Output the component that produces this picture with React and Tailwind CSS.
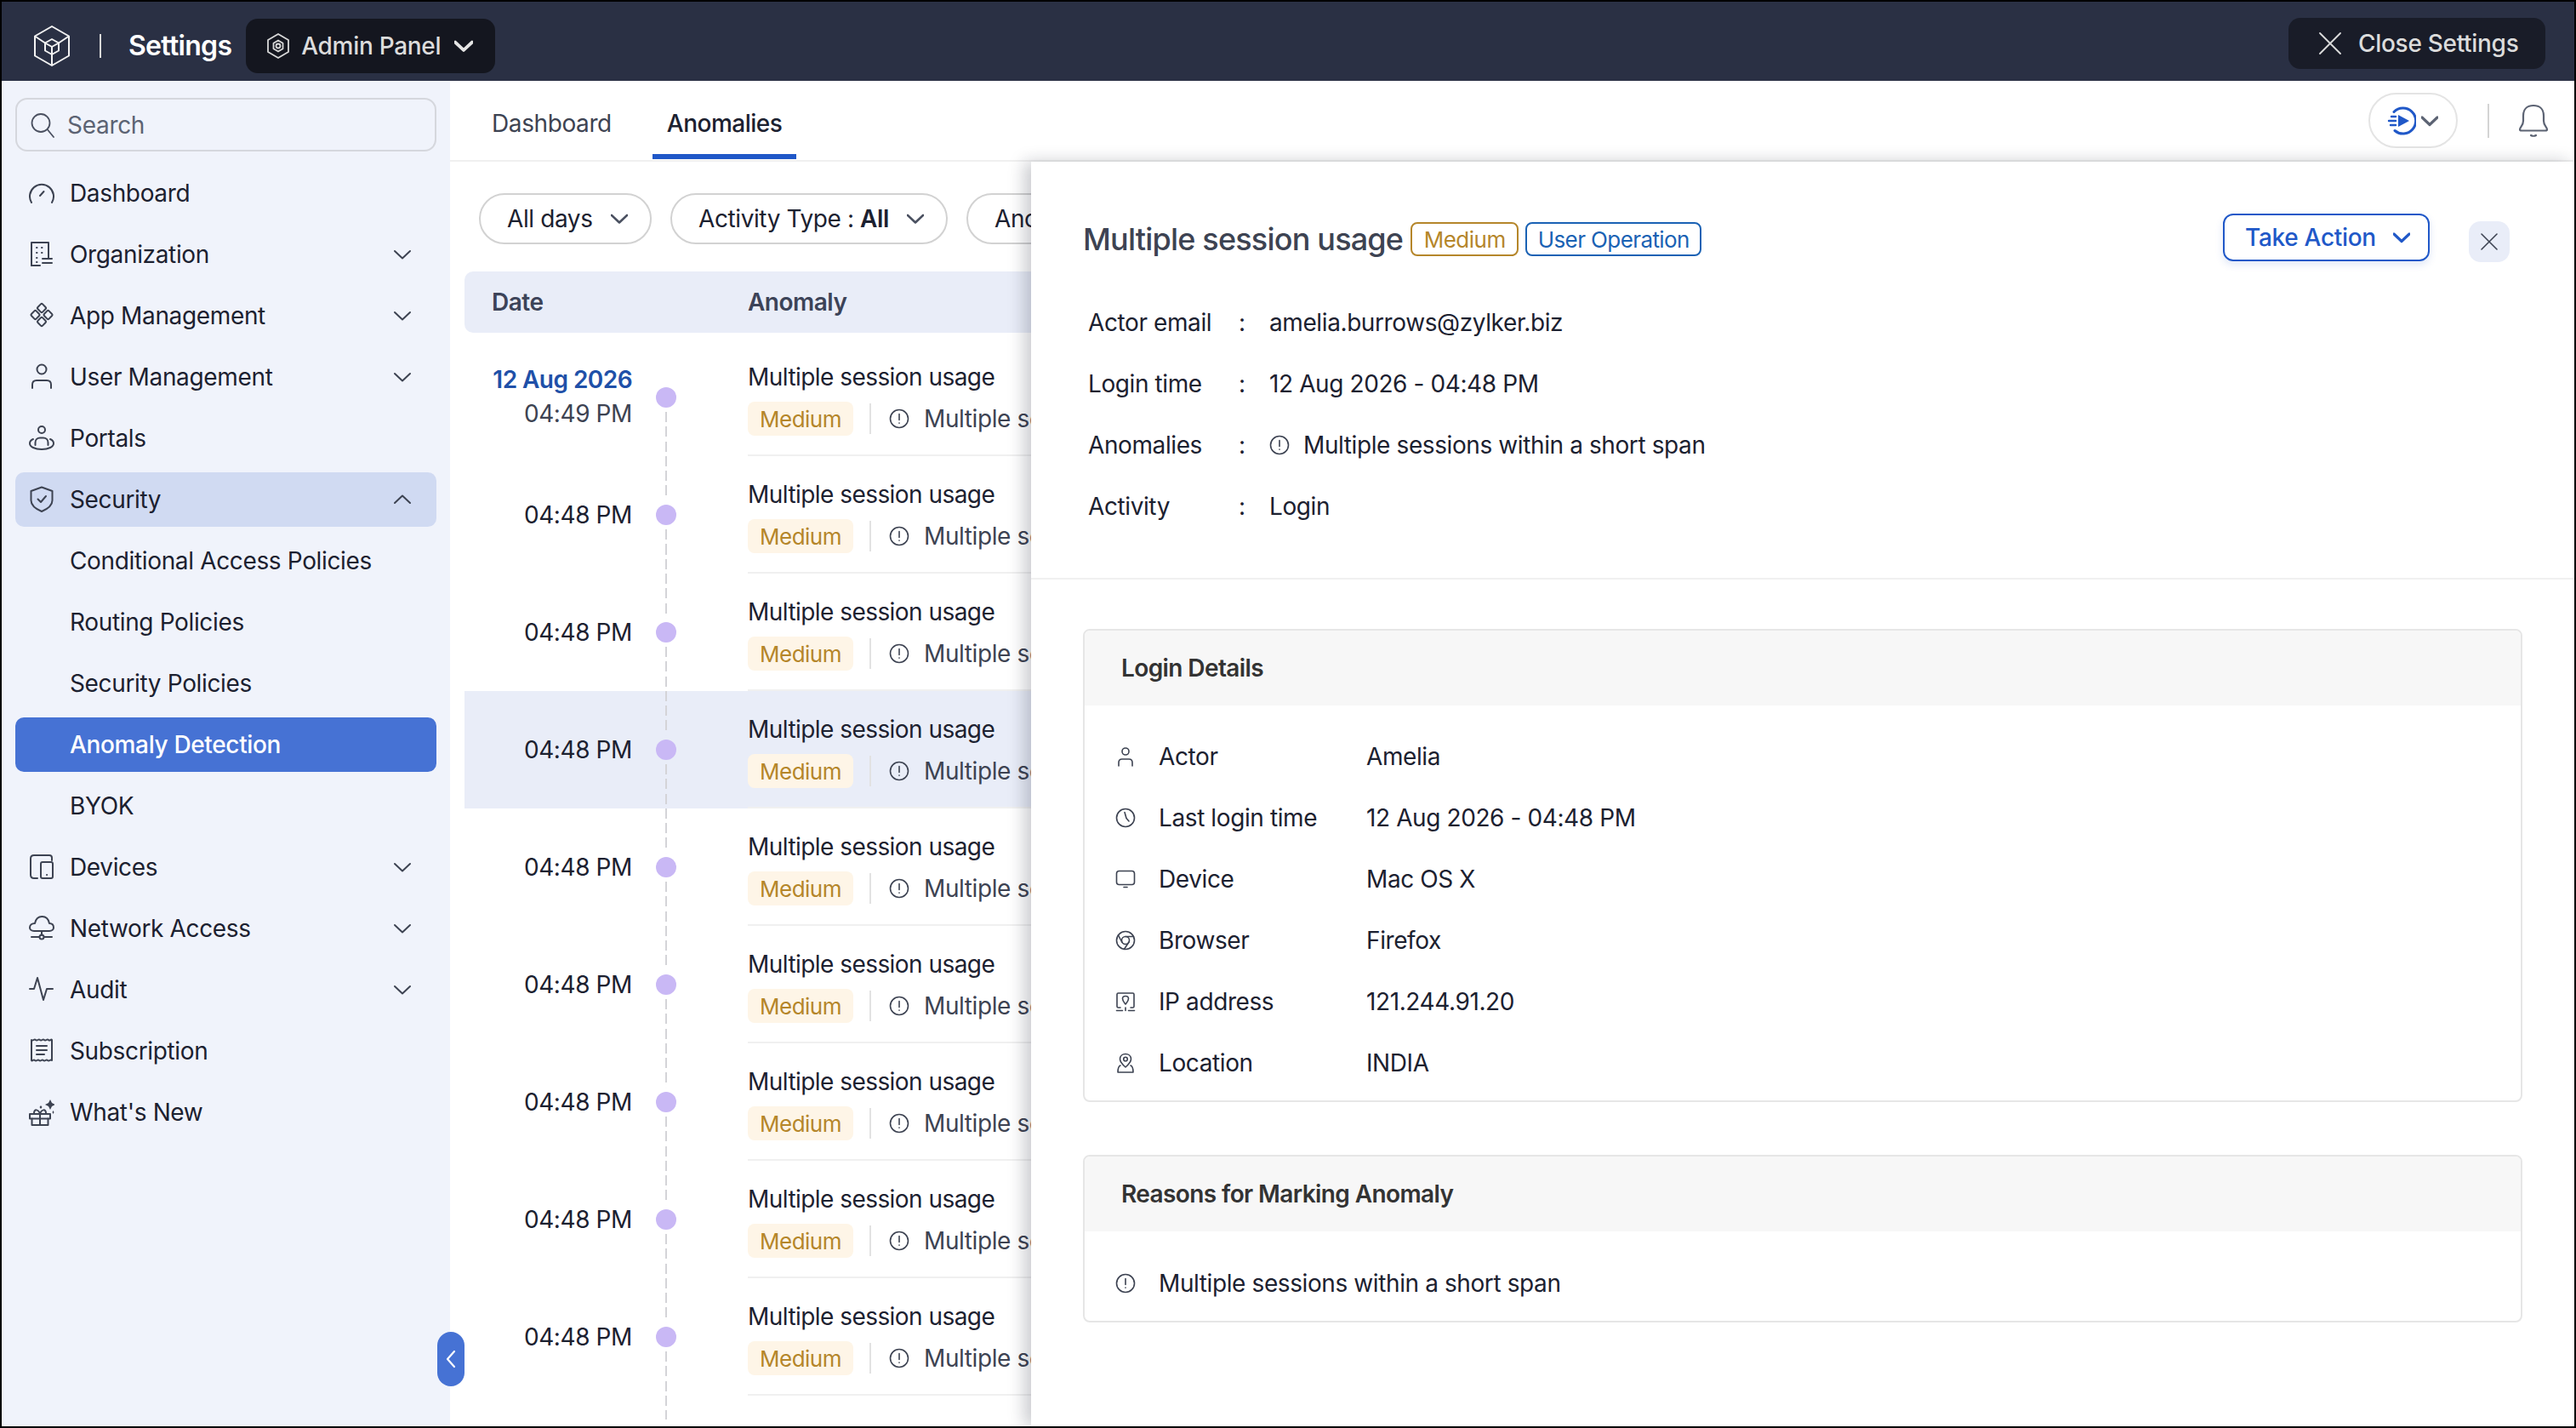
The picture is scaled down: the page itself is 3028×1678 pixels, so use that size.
import React from 'react';

const Ic = ({ w = 30, h = 30, vb, sw = 2, color = '#3d4352', className = '', children }) => (
  <svg
    width={w}
    height={h}
    viewBox={vb || `0 0 ${w} ${h}`}
    fill="none"
    stroke={color}
    strokeWidth={sw}
    strokeLinecap="round"
    strokeLinejoin="round"
    className={`shrink-0 ${className}`}
  >
    {children}
  </svg>
);

const Chevron = ({ w = 20, color = '#3d4352', sw = 2, up = false }) => (
  <svg width={w} height={w} viewBox="0 0 20 20" fill="none" stroke={color} strokeWidth={sw} strokeLinecap="round" strokeLinejoin="round" className="shrink-0">
    {up ? <path d="M1 14 10 5.5 19 14" /> : <path d="M1 6 10 14.5 19 6" />}
  </svg>
);

const navIcons = {
  gauge: (
    <>
      <path d="M3 27A14 14 0 1 1 27 27" />
      <path d="M13 19 17.5 14" />
    </>
  ),
  org: (
    <>
      <path d="M3 29V2H23V21" />
      <path d="M3 29H13" />
      <path d="M9 8H9.5M15 8H15.5M9 14H9.5M15 14H15.5M9 20H9.5M9 25H9.5" />
      <path d="M16 21H27M16 26H27" />
    </>
  ),
  app: (
    <>
      <rect x="11" y="3" width="8" height="8" rx="1.5" transform="rotate(45 15 7)" />
      <rect x="3.5" y="11" width="8" height="8" rx="1.5" transform="rotate(45 7.5 15)" />
      <rect x="18.5" y="11" width="8" height="8" rx="1.5" transform="rotate(45 22.5 15)" />
      <rect x="11" y="19" width="8" height="8" rx="1.5" transform="rotate(45 15 23)" />
    </>
  ),
  user: (
    <>
      <circle cx="15" cy="7" r="5.5" />
      <path d="M4 29V25C4 21.5 6 20 9 20H21C24 20 26 21.5 26 25V29" />
    </>
  ),
  portal: (
    <>
      <circle cx="15" cy="6" r="4" />
      <path d="M7.5 24V21C7.5 17.5 10 15.5 13 15.5H17C20 15.5 22.5 17.5 22.5 21V24" />
      <path d="M5 17C2.5 18 1 20 1 22C1 26 7 29 15 29C23 29 29 26 29 22C29 20 27.5 18 25 17" />
    </>
  ),
  shield: (
    <>
      <path d="M15 1.5 27.5 6V17C27.5 23 22 27 15 30C8 27 2.5 23 2.5 17V6Z" />
      <path d="M10.5 15.5 14 19 20 12" />
    </>
  ),
  devices: (
    <>
      <path d="M10 29H6C3.5 29 2 27.5 2 25V6C2 3.5 3.5 2 6 2H24C26 2 27 3 27 5V8" />
      <rect x="14" y="10" width="14" height="19" rx="2" />
      <path d="M21 25H21.2" />
    </>
  ),
  cloud: (
    <>
      <path d="M8 19H6C3 19 1 17 1 15C1 12 3.5 10 7 10C8 5 11 2 15.5 2C20 2 23 5 24 10C27 10 29 12 29 15C29 17 27 19 24 19H8Z" />
      <path d="M15 19V24M3 26H12M18 26H27" />
      <circle cx="15" cy="26" r="2.5" />
    </>
  ),
  audit: <path d="M1 15H6L10 2 17 28 21 15H28" />,
  sub: (
    <>
      <path d="M3 3C5 5 6 1 8 3C10 5 11 1 13 3C15 5 16 1 18 3C20 5 21 1 23 3C25 5 26 1 27 3V27C25 25 24 29 22 27C20 25 19 29 17 27C15 25 14 29 12 27C10 25 9 29 7 27C5 25 4 29 3 27Z" />
      <path d="M9 10H21M9 15H21M9 20H18" />
    </>
  ),
  gift: (
    <>
      <rect x="1" y="18" width="24" height="5.5" />
      <path d="M3.5 23.5V31H22.5V23.5M13 18V31" />
      <path d="M6 17C6 12 11 12 13 18C15 12 20 12 20 17" />
      <path d="M14 8 15.5 10 14 12 12.5 10Z" fill="#3d4352" stroke="none" />
      <path d="M25 1 27 5 31 7 27 9 25 13 23 9 19 7 23 5Z" fill="#3d4352" stroke="none" />
      <path d="M28.5 14 29.5 16 28.5 18 27.5 16Z" fill="#3d4352" stroke="none" />
    </>
  ),
};

const NavItem = ({ icon, label, chevron, sub, tone }) => {
  const bg = tone === 'active' ? 'bg-[#4672d4] text-white' : tone === 'open' ? 'bg-[#d0daf2] text-[#1c2130]' : 'text-[#1c2130]';
  return (
    <div className={`flex h-[64px] items-center rounded-[10px] pl-[16px] pr-[30px] ${bg} ${tone === 'active' ? 'font-medium' : ''}`}>
      <div className={`flex w-[30px] justify-center ${sub ? 'invisible' : ''}`}>
        {icon && (
          <Ic w={30} h={32} vb="0 0 30 32">
            {navIcons[icon]}
          </Ic>
        )}
      </div>
      <span className="ml-[18px] flex-1 text-[28px] leading-[34px] tracking-[-0.35px]">{label}</span>
      {chevron && <Chevron up={chevron === 'up'} />}
    </div>
  );
};

const nav = [
  { icon: 'gauge', label: 'Dashboard' },
  { icon: 'org', label: 'Organization', chevron: 'down' },
  { icon: 'app', label: 'App Management', chevron: 'down' },
  { icon: 'user', label: 'User Management', chevron: 'down' },
  { icon: 'portal', label: 'Portals' },
  { icon: 'shield', label: 'Security', chevron: 'up', tone: 'open' },
  { label: 'Conditional Access Policies', sub: true },
  { label: 'Routing Policies', sub: true },
  { label: 'Security Policies', sub: true },
  { label: 'Anomaly Detection', sub: true, tone: 'active' },
  { label: 'BYOK', sub: true },
  { icon: 'devices', label: 'Devices', chevron: 'down' },
  { icon: 'cloud', label: 'Network Access', chevron: 'down' },
  { icon: 'audit', label: 'Audit', chevron: 'down' },
  { icon: 'sub', label: 'Subscription' },
  { icon: 'gift', label: "What's New" },
];

const AlertIcon = ({ size = 24 }) => (
  <Ic w={size} h={size} vb="0 0 24 24" sw={1.6}>
    <circle cx="12" cy="12" r="10.5" />
    <path d="M12 6.5V13.5M12 17V17.2" />
  </Ic>
);

const Header = () => (
  <header className="flex h-[93px] shrink-0 items-center bg-[#2a3044] pl-[38px] pr-[34px] pt-[10px]">
    <svg width="42" height="48" viewBox="0 0 42 48" fill="none" stroke="#f2f2f2" strokeWidth="2" strokeLinejoin="round" className="shrink-0">
      <path d="M21 1 41 12.5V35.5L21 47 1 35.5V12.5Z" />
      <path d="M21 16 29 20.5V29.5L21 34 13 29.5V20.5Z" />
      <path d="M13 20.5 21 25 29 20.5M21 25V34" />
      <path d="M1 12.5 13 20.5M41 12.5 29 20.5M21 34V47" />
    </svg>
    <div className="ml-[35px] h-[28px] w-[2px] bg-[#d8d8d8]" />
    <span className="ml-[32px] text-[32px] font-semibold leading-[40px] tracking-[-0.7px] text-white">Settings</span>
    <div className="ml-[17px] flex h-[64px] w-[293px] items-center rounded-[14px] bg-[#14161f] pl-[25px]">
      <svg width="26" height="30" viewBox="0 0 26 30" fill="none" stroke="#d8d8d8" strokeWidth="1.8" strokeLinejoin="round" className="shrink-0">
        <path d="M13 1 25 8V22L13 29 1 22V8Z" />
        <circle cx="13" cy="15" r="2.5" />
        <path d="M13 8.5 18.5 11.7V18.3L13 21.5 7.5 18.3V11.7Z" />
      </svg>
      <span className="ml-[14px] text-[28px] font-medium leading-[34px] tracking-[-0.3px] text-[#dcdcdc]">Admin Panel</span>
      <div className="ml-[16px]">
        <Chevron w={22} color="#e5e5e5" sw={3.4} />
      </div>
    </div>
    <div className="mb-[5px] ml-auto flex h-[60px] w-[302px] items-center rounded-[14px] bg-[#191c28] pl-[36px]">
      <svg width="26" height="26" viewBox="0 0 26 26" fill="none" stroke="#dcdcdc" strokeWidth="1.8" strokeLinecap="round" className="shrink-0">
        <path d="M1 1 25 25M25 1 1 25" />
      </svg>
      <span className="ml-[20px] text-[28px] font-medium leading-[34px] tracking-[-0.3px] text-[#dcdcdc]">Close Settings</span>
    </div>
  </header>
);

const Sidebar = () => (
  <aside className="w-[527px] shrink-0 bg-[#f0f3fb] pl-[16px] pr-[16px] pt-[20px]">
    <div className="flex h-[63px] items-center rounded-[14px] border-2 border-[#d5d7dd] pl-[16px]">
      <Ic w={28} h={30} vb="0 0 28 30" sw={1.8} color="#4a5060">
        <circle cx="12" cy="12.5" r="10.5" />
        <path d="M20 20.5 27 29" />
      </Ic>
      <span className="ml-[15px] text-[28px] leading-[34px] tracking-[-0.3px] text-[#5c6373]">Search</span>
    </div>
    <nav className="mt-[17px] flex flex-col gap-[8px]">
      {nav.map((item) => (
        <NavItem key={item.label} {...item} />
      ))}
    </nav>
  </aside>
);

const Filter = ({ w, children, chevron = true }) => (
  <div className={`flex h-[60px] shrink-0 items-center rounded-full border-2 border-[#d2d2d2] pl-[31px] text-[28px] leading-[34px] tracking-[-0.4px] text-[#1c2130] ${w}`}>
    {children}
    {chevron && (
      <div className="ml-[21px]">
        <Chevron w={20} color="#4a5060" sw={2.6} />
      </div>
    )}
  </div>
);

const Row = ({ date, time, selected, first }) => (
  <div className={`flex h-[138px] ${selected ? 'bg-[#e9edf8]' : ''}`}>
    <div className="flex w-[197px] flex-col items-end justify-center">
      {date && <span className="mt-[-2px] text-[28px] font-semibold leading-[40px] tracking-[-0.55px] text-[#2050a8]">{date}</span>}
      <span className={`text-[28px] leading-[40px] tracking-[-0.4px] ${date ? 'text-[#3d4352]' : 'text-[#1c2130]'}`}>{time}</span>
    </div>
    <div className="relative flex w-[80px] items-center justify-center">
      <div className={`absolute bottom-0 w-[2px] bg-[repeating-linear-gradient(to_bottom,#d4d4d8_0,#d4d4d8_12px,transparent_12px,transparent_17.25px)] ${first ? 'top-1/2' : 'top-0'}`} />
      <div className={`relative h-[24px] w-[24px] rounded-full bg-[#c9b8f5] ring-[5px] ${selected ? 'ring-[#e9edf8]' : 'ring-white'}`} />
    </div>
    <div className="ml-[56px] flex-1 border-b-2 border-[#f0f0f0] pt-[28px]">
      <div className="text-[28px] leading-[34px] tracking-[-0.55px] text-[#1c2130]">Multiple session usage</div>
      <div className="mt-[11px] flex items-center">
        <span className="flex h-[40px] w-[124px] items-center justify-center rounded-[8px] bg-[#fef5e7] text-[26px] tracking-[-0.5px] text-[#b5862a]">Medium</span>
        <div className="ml-[19px] h-[36px] w-[2px] bg-[#e2e2e2]" />
        <div className="ml-[21px]">
          <AlertIcon />
        </div>
        <span className="ml-[17px] whitespace-nowrap text-[28px] tracking-[-0.4px] text-[#3d4352]">Multiple sessions within a short span</span>
      </div>
    </div>
  </div>
);

const InfoRow = ({ label, children }) => (
  <div className="flex h-[72px] items-center text-[28px] leading-[34px] tracking-[-0.4px] text-[#1c2130]">
    <span className="w-[177px]">{label}</span>
    <span className="w-[36px]">:</span>
    {children}
  </div>
);

const detailIcons = {
  user: (
    <>
      <circle cx="12" cy="6" r="4" />
      <path d="M4 23V19C4 16.5 5.5 15 8 15H16C18.5 15 20 16.5 20 19V23" />
    </>
  ),
  clock: (
    <>
      <circle cx="12" cy="12" r="10.5" />
      <path d="M11 5.5 13 12.5 16 16" />
    </>
  ),
  device: (
    <>
      <rect x="1.5" y="2.5" width="21" height="16" rx="3" />
      <path d="M10 21.5H14" />
    </>
  ),
  browser: (
    <>
      <circle cx="12" cy="12" r="10.5" />
      <circle cx="12" cy="12" r="4.5" />
      <path d="M12 7.5H21.5M8 14.5 3.5 6M16 14 10.5 22.3" />
    </>
  ),
  ip: (
    <>
      <path d="M6 19H3.5C2.5 19 2 18.5 2 17.5V3.5C2 2.5 2.5 2 3.5 2H20.5C21.5 2 22 2.5 22 3.5V17.5C22 18.5 21.5 19 20.5 19H18" />
      <path d="M12 15C10 12.5 8.5 11 8.5 8.5C8.5 6.5 10 5.5 12 5.5C14 5.5 15.5 6.5 15.5 8.5C15.5 11 14 12.5 12 15Z" />
      <path d="M12 19V22.5M1.5 22.5H8.5M15.5 22.5H22.5" />
    </>
  ),
  location: (
    <>
      <path d="M12 17C8 13.5 5.5 10.5 5.5 7.5C5.5 3.5 8.5 1.5 12 1.5C15.5 1.5 18.5 3.5 18.5 7.5C18.5 10.5 16 13.5 12 17Z" />
      <circle cx="12" cy="7.5" r="2.3" />
      <path d="M6 15C3.5 16 3 18 3 23H21C21 18 20.5 16 18 15" />
    </>
  ),
};

const DetailRow = ({ icon, label, value }) => (
  <div className="flex h-[72px] items-center text-[28px] leading-[34px] tracking-[-0.4px] text-[#1c2130]">
    <Ic w={24} h={24} vb="0 0 24 24" sw={1.6}>
      {detailIcons[icon]}
    </Ic>
    <span className="ml-[27px] w-[244px] shrink-0">{label}</span>
    <span>{value}</span>
  </div>
);

const Card = ({ title, className = '', bodyClass = '', children }) => (
  <section className={`rounded-[8px] border-2 border-[#e6e6e6] ${className}`}>
    <div className="flex h-[88px] items-center rounded-t-[6px] bg-[#f7f7f7] pl-[43px] text-[28px] font-semibold tracking-[-0.6px] text-[#333333]">{title}</div>
    <div className={`pl-[36px] ${bodyClass}`}>{children}</div>
  </section>
);

const DetailPanel = () => (
  <div className="absolute bottom-0 left-[683px] right-0 top-[95px] bg-white shadow-[-8px_0_18px_rgba(20,25,40,0.22)]">
    <div className="border-b-2 border-[#f0f0f0] pb-[48px] pt-[61px]">
      <div className="flex items-start pl-[61px] pr-[76px]">
        <div className="mt-[10px] flex items-center">
          <h2 className="text-[36px] font-medium leading-[40px] tracking-[-0.8px] text-[#3d4352]">Multiple session usage</h2>
          <span className="ml-[9px] flex h-[40px] w-[127px] items-center justify-center rounded-[8px] border-2 border-[#b5862a] text-[26px] tracking-[-0.5px] text-[#b5862a]">Medium</span>
          <span className="ml-[8px] flex h-[40px] w-[207px] items-center justify-center rounded-[8px] border-2 border-[#1a62b4] text-[26px] tracking-[-0.6px] text-[#1a62b4]">User Operation</span>
        </div>
        <div className="ml-auto flex h-[56px] w-[243px] items-center rounded-[12px] border-2 border-[#2058c8] pl-[24px] shadow-[0_4px_10px_rgba(32,88,200,0.14)]">
          <span className="text-[28px] font-medium leading-[34px] tracking-[-0.3px] text-[#2058c8]">Take Action</span>
          <div className="ml-[20px]">
            <Chevron w={20} color="#2058c8" sw={3.2} />
          </div>
        </div>
        <div className="ml-[46px] mt-[9px] flex h-[48px] w-[48px] items-center justify-center rounded-[14px] bg-[#e9edf8]">
          <svg width="20" height="20" viewBox="0 0 20 20" fill="none" stroke="#3d4352" strokeWidth="1.6" strokeLinecap="round">
            <path d="M1 1 19 19M19 1 1 19" />
          </svg>
        </div>
      </div>
      <div className="mt-[35px] pl-[67px]">
        <InfoRow label="Actor email">amelia.burrows@zylker.biz</InfoRow>
        <InfoRow label="Login time">12 Aug 2026 - 04:48 PM</InfoRow>
        <InfoRow label="Anomalies">
          <AlertIcon />
          <span className="ml-[16px]">Multiple sessions within a short span</span>
        </InfoRow>
        <InfoRow label="Activity">Login</InfoRow>
      </div>
    </div>
    <div className="px-[61px] pt-[58px]">
      <Card title="Login Details" className="h-[556px]" bodyClass="pt-[24px]">
        <DetailRow icon="user" label="Actor" value="Amelia" />
        <DetailRow icon="clock" label="Last login time" value="12 Aug 2026 - 04:48 PM" />
        <DetailRow icon="device" label="Device" value="Mac OS X" />
        <DetailRow icon="browser" label="Browser" value="Firefox" />
        <DetailRow icon="ip" label="IP address" value="121.244.91.20" />
        <DetailRow icon="location" label="Location" value="INDIA" />
      </Card>
      <Card title="Reasons for Marking Anomaly" className="mt-[62px] h-[197px]" bodyClass="pt-[25px]">
        <div className="flex h-[72px] items-center text-[28px] leading-[34px] tracking-[-0.4px] text-[#1c2130]">
          <AlertIcon />
          <span className="ml-[27px]">Multiple sessions within a short span</span>
        </div>
      </Card>
    </div>
  </div>
);

const Main = () => (
  <main className="relative min-w-0 flex-1 overflow-hidden bg-white">
    <div className="flex h-[95px] items-stretch border-b-2 border-[#f0f0f0] pl-[32px] pr-[28px]">
      <div className="flex h-[92px] items-center px-[17px] pt-[8px] text-[28px] tracking-[-0.4px] text-[#3d4352]">Dashboard</div>
      <div className="ml-[31px] flex h-[92px] items-center border-b-[6px] border-[#2058c8] px-[17px] pt-[14px] text-[28px] font-medium tracking-[-0.5px] text-[#1c2130]">Anomalies</div>
      <div className="ml-auto flex items-center">
        <div className="flex h-[65px] w-[105px] items-center rounded-full border-2 border-[#e4e4e4] pl-[20px]">
          <svg width="34" height="34" viewBox="0 0 34 34" fill="none" className="shrink-0">
            <path d="M8 6.5A15 15 0 1 1 9 28.5" stroke="#2058c8" strokeWidth="3" strokeLinecap="round" />
            <path d="M13 10 26 17 13 24Z" fill="#2058c8" />
            <path d="M5 12H10M2 17H10M4 22H10" stroke="#2058c8" strokeWidth="2.4" strokeLinecap="round" />
          </svg>
          <div className="ml-[6px]">
            <Chevron w={20} color="#5c6373" sw={3.2} />
          </div>
        </div>
        <div className="ml-[35px] h-[40px] w-[2px] bg-[#d4d4d4]" />
        <svg width="36" height="40" viewBox="0 0 36 40" fill="none" stroke="#5c6373" strokeWidth="2.2" strokeLinecap="round" strokeLinejoin="round" className="ml-[34px] mr-[2px] shrink-0">
          <path d="M2 30C2 27 6 26 6 20V14C6 6 11 2 18 2C25 2 30 6 30 14V20C30 26 34 27 34 30C34 31 33 31.5 32 31.5H4C3 31.5 2 31 2 30Z" />
          <path d="M15 37C16.5 38 19.5 38 21 37" />
        </svg>
      </div>
    </div>
    <div className="flex gap-[22px] pl-[34px] pt-[37px]">
      <Filter w="w-[203px]">All days</Filter>
      <Filter w="w-[326px]">
        <span>
          Activity Type : <span className="font-semibold">All</span>
        </span>
      </Filter>
      <Filter w="w-[300px]">Anomaly</Filter>
    </div>
    <div className="ml-[17px] mt-[32px]">
      <div className="flex h-[72px] items-center rounded-l-[10px] bg-[#e9edf8] pl-[32px] text-[28px] font-semibold tracking-[-0.5px] text-[#3c4358]">
        <span className="w-[301px]">Date</span>
        <span>Anomaly</span>
      </div>
      <div className="mt-[7px]">
        <Row date="12 Aug 2026" time="04:49 PM" first />
        <Row time="04:48 PM" />
        <Row time="04:48 PM" />
        <Row time="04:48 PM" selected />
        <Row time="04:48 PM" />
        <Row time="04:48 PM" />
        <Row time="04:48 PM" />
        <Row time="04:48 PM" />
        <Row time="04:48 PM" />
        <div className="flex h-[28px]">
          <div className="w-[197px]" />
          <div className="flex w-[80px] justify-center">
            <div className="h-full w-[2px] bg-[repeating-linear-gradient(to_bottom,#d4d4d8_0,#d4d4d8_12px,transparent_12px,transparent_17.25px)]" />
          </div>
        </div>
      </div>
    </div>
    <DetailPanel />
  </main>
);

export default function App() {
  return (
    <div className="relative flex h-[1678px] w-[3028px] flex-col overflow-hidden border-2 border-black bg-white font-['Inter','Noto_Sans',sans-serif]">
      <Header />
      <div className="flex min-h-0 flex-1">
        <Sidebar />
        <Main />
      </div>
      <div className="absolute left-[512px] top-[1563px] flex h-[64px] w-[32px] items-center justify-center rounded-[16px] bg-[#4672d4]">
        <svg width="12" height="22" viewBox="0 0 12 22" fill="none" stroke="#ffffff" strokeWidth="2.2" strokeLinecap="round" strokeLinejoin="round">
          <path d="M10 2 2 11 10 20" />
        </svg>
      </div>
    </div>
  );
}
